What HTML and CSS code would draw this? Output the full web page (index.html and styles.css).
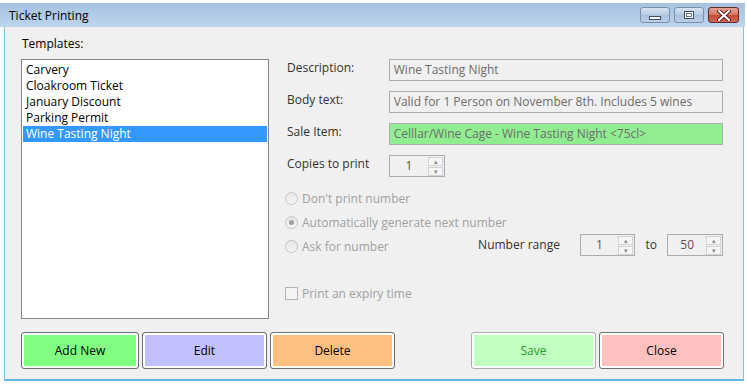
FILE: index.html
```html
<!DOCTYPE html>
<html lang="en">
<head>
    <meta charset="UTF-8">
    <title>Ticket Printing</title>
    <link rel="stylesheet" href="styles.css">
</head>
<body>
    <div class="window">
        <div class="titlebar">
            <span class="title">Ticket Printing</span>
            <div class="caption-btns">
                <div class="cap-btn"><span class="min-icon"></span></div>
                <div class="cap-btn"><span class="max-icon"></span></div>
                <div class="cap-btn close-cap">
                    <svg width="16" height="11" viewBox="0 0 16 11">
                        <path d="M3 1 L13 10 M13 1 L3 10" stroke="#5a2020" stroke-width="4" stroke-linecap="round"/>
                        <path d="M3 1 L13 10 M13 1 L3 10" stroke="#fff" stroke-width="2" stroke-linecap="round"/>
                    </svg>
                </div>
            </div>
        </div>

        <div class="client">
            <div class="main">
                <div class="left">
                    <div class="section-label">Templates:</div>
                    <div class="listbox">
                        <div class="list-item">Carvery</div>
                        <div class="list-item">Cloakroom Ticket</div>
                        <div class="list-item">January Discount</div>
                        <div class="list-item">Parking Permit</div>
                        <div class="list-item selected">Wine Tasting Night</div>
                    </div>
                </div>

                <div class="right">
                    <div class="field-row">
                        <label class="field-label">Description:</label>
                        <div class="textbox">Wine Tasting Night</div>
                    </div>
                    <div class="field-row">
                        <label class="field-label">Body text:</label>
                        <div class="textbox">Valid for 1 Person on November 8th. Includes 5 wines</div>
                    </div>
                    <div class="field-row">
                        <label class="field-label">Sale Item:</label>
                        <div class="textbox sale">Celllar/Wine Cage - Wine Tasting Night &lt;75cl&gt;</div>
                    </div>
                    <div class="field-row">
                        <label class="field-label">Copies to print</label>
                        <div class="spinner">
                            <span class="spin-value">1</span>
                            <div class="spin-btns">
                                <div class="spin-up">&#9652;</div>
                                <div class="spin-down">&#9662;</div>
                            </div>
                        </div>
                    </div>

                    <div class="options">
                        <div class="option">
                            <span class="radio"></span>
                            <span class="opt-text">Don't print number</span>
                        </div>
                        <div class="option">
                            <span class="radio checked"></span>
                            <span class="opt-text">Automatically generate next number</span>
                        </div>
                        <div class="option">
                            <span class="radio"></span>
                            <span class="opt-text ask">Ask for number</span>
                            <span class="range-label">Number range</span>
                            <div class="spinner">
                                <span class="spin-value">1</span>
                                <div class="spin-btns">
                                    <div class="spin-up">&#9652;</div>
                                    <div class="spin-down">&#9662;</div>
                                </div>
                            </div>
                            <span class="to-label">to</span>
                            <div class="spinner">
                                <span class="spin-value">50</span>
                                <div class="spin-btns">
                                    <div class="spin-up">&#9652;</div>
                                    <div class="spin-down">&#9662;</div>
                                </div>
                            </div>
                        </div>
                        <div class="option expiry">
                            <span class="checkbox"></span>
                            <span class="opt-text">Print an expiry time</span>
                        </div>
                    </div>
                </div>
            </div>

            <div class="button-row">
                <div class="btn-group">
                    <button class="btn add">Add New</button>
                    <button class="btn edit">Edit</button>
                    <button class="btn delete">Delete</button>
                </div>
                <div class="btn-group">
                    <button class="btn save">Save</button>
                    <button class="btn close">Close</button>
                </div>
            </div>
        </div>
    </div>
</body>
</html>
```

FILE: styles.css
```css
* {
    margin: 0;
    padding: 0;
    box-sizing: border-box;
}

body {
    background: #ffffff;
    font-family: 'Open Sans', 'Noto Sans', sans-serif;
    font-size: 12px;
    color: #1e1e1e;
}

.window {
    width: 745px;
    padding-top: 3px;
}

.titlebar {
    height: 24px;
    background: linear-gradient(#a6c2e0, #bdd5ed);
    display: flex;
    align-items: center;
    justify-content: space-between;
    padding-left: 9px;
    padding-right: 6px;
}

.title {
    color: #000;
    font-size: 12px;
}

.caption-btns {
    display: flex;
    gap: 3px;
    align-self: flex-start;
    margin-top: 4px;
}

.cap-btn {
    width: 30px;
    height: 16px;
    border: 1px solid #7a8fa9;
    border-radius: 3px;
    background: linear-gradient(#d6e3f2, #b6cbe3 50%, #a9c0dc 51%, #bcd0e7);
    display: flex;
    align-items: center;
    justify-content: center;
}

.cap-btn + .cap-btn {
    margin-left: 1px;
}

.close-cap {
    width: 31px;
    border-color: #5e2a2a;
    background: linear-gradient(#e5a294, #d5735f 50%, #c44a34 51%, #cf6a55);
}

.min-icon {
    width: 12px;
    height: 4px;
    border: 1px solid #3d4f66;
    background: #fff;
    margin-top: 5px;
}

.max-icon {
    width: 10px;
    height: 8px;
    border: 1px solid #3d4f66;
    background: #fff;
    box-shadow: inset 0 0 0 1px #fff, inset 0 0 0 2px #6d7f96;
}

.client {
    margin-left: 4px;
    width: 740px;
    height: 354px;
    background: #f0f0f0;
    border-left: 1px solid #7fc4ea;
    border-right: 1px solid #7fc4ea;
    border-bottom: 2px solid #63b8e4;
    display: flex;
    flex-direction: column;
}

.main {
    display: flex;
    padding-left: 16px;
    padding-top: 9px;
    height: 305px;
}

.left {
    width: 248px;
}

.section-label {
    line-height: 16px;
    height: 16px;
    margin-left: 1px;
    margin-bottom: 7px;
    color: #000;
}

.listbox {
    height: 260px;
    background: #fff;
    border: 1px solid #828790;
    padding: 2px 1px;
}

.list-item {
    height: 16px;
    line-height: 16px;
    padding-left: 3px;
    color: #000;
}

.list-item.selected {
    background: #3399ff;
    color: #fff;
}

.right {
    margin-left: 18px;
    padding-top: 23px;
    width: 436px;
}

.field-row {
    display: flex;
    align-items: flex-start;
    margin-bottom: 10px;
}

.field-label {
    width: 102px;
    line-height: 16px;
    padding-top: 1px;
    color: #333;
}

.textbox {
    width: 335px;
    height: 22px;
    border: 1px solid #acacac;
    background: #f0f0f0;
    color: #6d6d6d;
    padding-left: 4px;
    line-height: 20px;
    white-space: nowrap;
    overflow: hidden;
}

.textbox.sale {
    background: #90ee90;
}

.spinner {
    width: 56px;
    height: 22px;
    border: 1px solid #acacac;
    display: flex;
    align-items: center;
    color: #555;
}

.spin-value {
    flex: 1;
    text-align: center;
    line-height: 20px;
}

.spin-btns {
    width: 15px;
    height: 18px;
    margin-right: 1px;
    display: flex;
    flex-direction: column;
    gap: 1px;
}

.spin-up,
.spin-down {
    flex: 1;
    border: 1px solid #d2d2d2;
    background: #f5f5f5;
    font-size: 7px;
    line-height: 7px;
    text-align: center;
    color: #8a8a8a;
}

.options {
    margin-top: -1px;
    margin-left: -2px;
}

.option {
    display: flex;
    align-items: center;
    height: 24px;
}

.radio {
    width: 13px;
    height: 13px;
    border-radius: 50%;
    border: 1px solid #c6c6c6;
    background: linear-gradient(#e6e6e6, #f6f6f6);
    margin-right: 4px;
    display: flex;
    align-items: center;
    justify-content: center;
}

.radio.checked::after {
    content: "";
    width: 5px;
    height: 5px;
    border-radius: 50%;
    background: #a0a0a0;
}

.opt-text {
    color: #a0a0a0;
}

.opt-text.ask {
    width: 177px;
}

.range-label {
    width: 102px;
    color: #333;
    margin-top: -3px;
}

.to-label {
    width: 32px;
    padding-left: 10px;
    color: #333;
    margin-top: -3px;
}

.option .spinner {
    margin-top: -2px;
}

.expiry {
    margin-top: 23px;
}

.checkbox {
    width: 13px;
    height: 13px;
    border: 1px solid #b4b4b4;
    background: #f4f4f4;
    margin-right: 4px;
}

.button-row {
    display: flex;
    justify-content: space-between;
    padding-left: 16px;
    padding-right: 19px;
}

.btn-group {
    display: flex;
    gap: 3px;
}

.btn {
    width: 125px;
    height: 37px;
    border: 1px solid #707070;
    border-radius: 3px;
    box-shadow: inset 0 0 0 2px #fff;
    font-family: 'Open Sans', 'Noto Sans', sans-serif;
    font-size: 12px;
    color: #000;
}

.btn.add {
    width: 118px;
    background: #80ff80;
}

.btn.edit {
    background: #c0c0ff;
}

.btn.delete {
    background: #ffc080;
}

.btn.save {
    background: #c0ffc0;
    color: #2a9a2a;
    border-color: #adadad;
}

.btn.close {
    background: #ffc0c0;
}
```
